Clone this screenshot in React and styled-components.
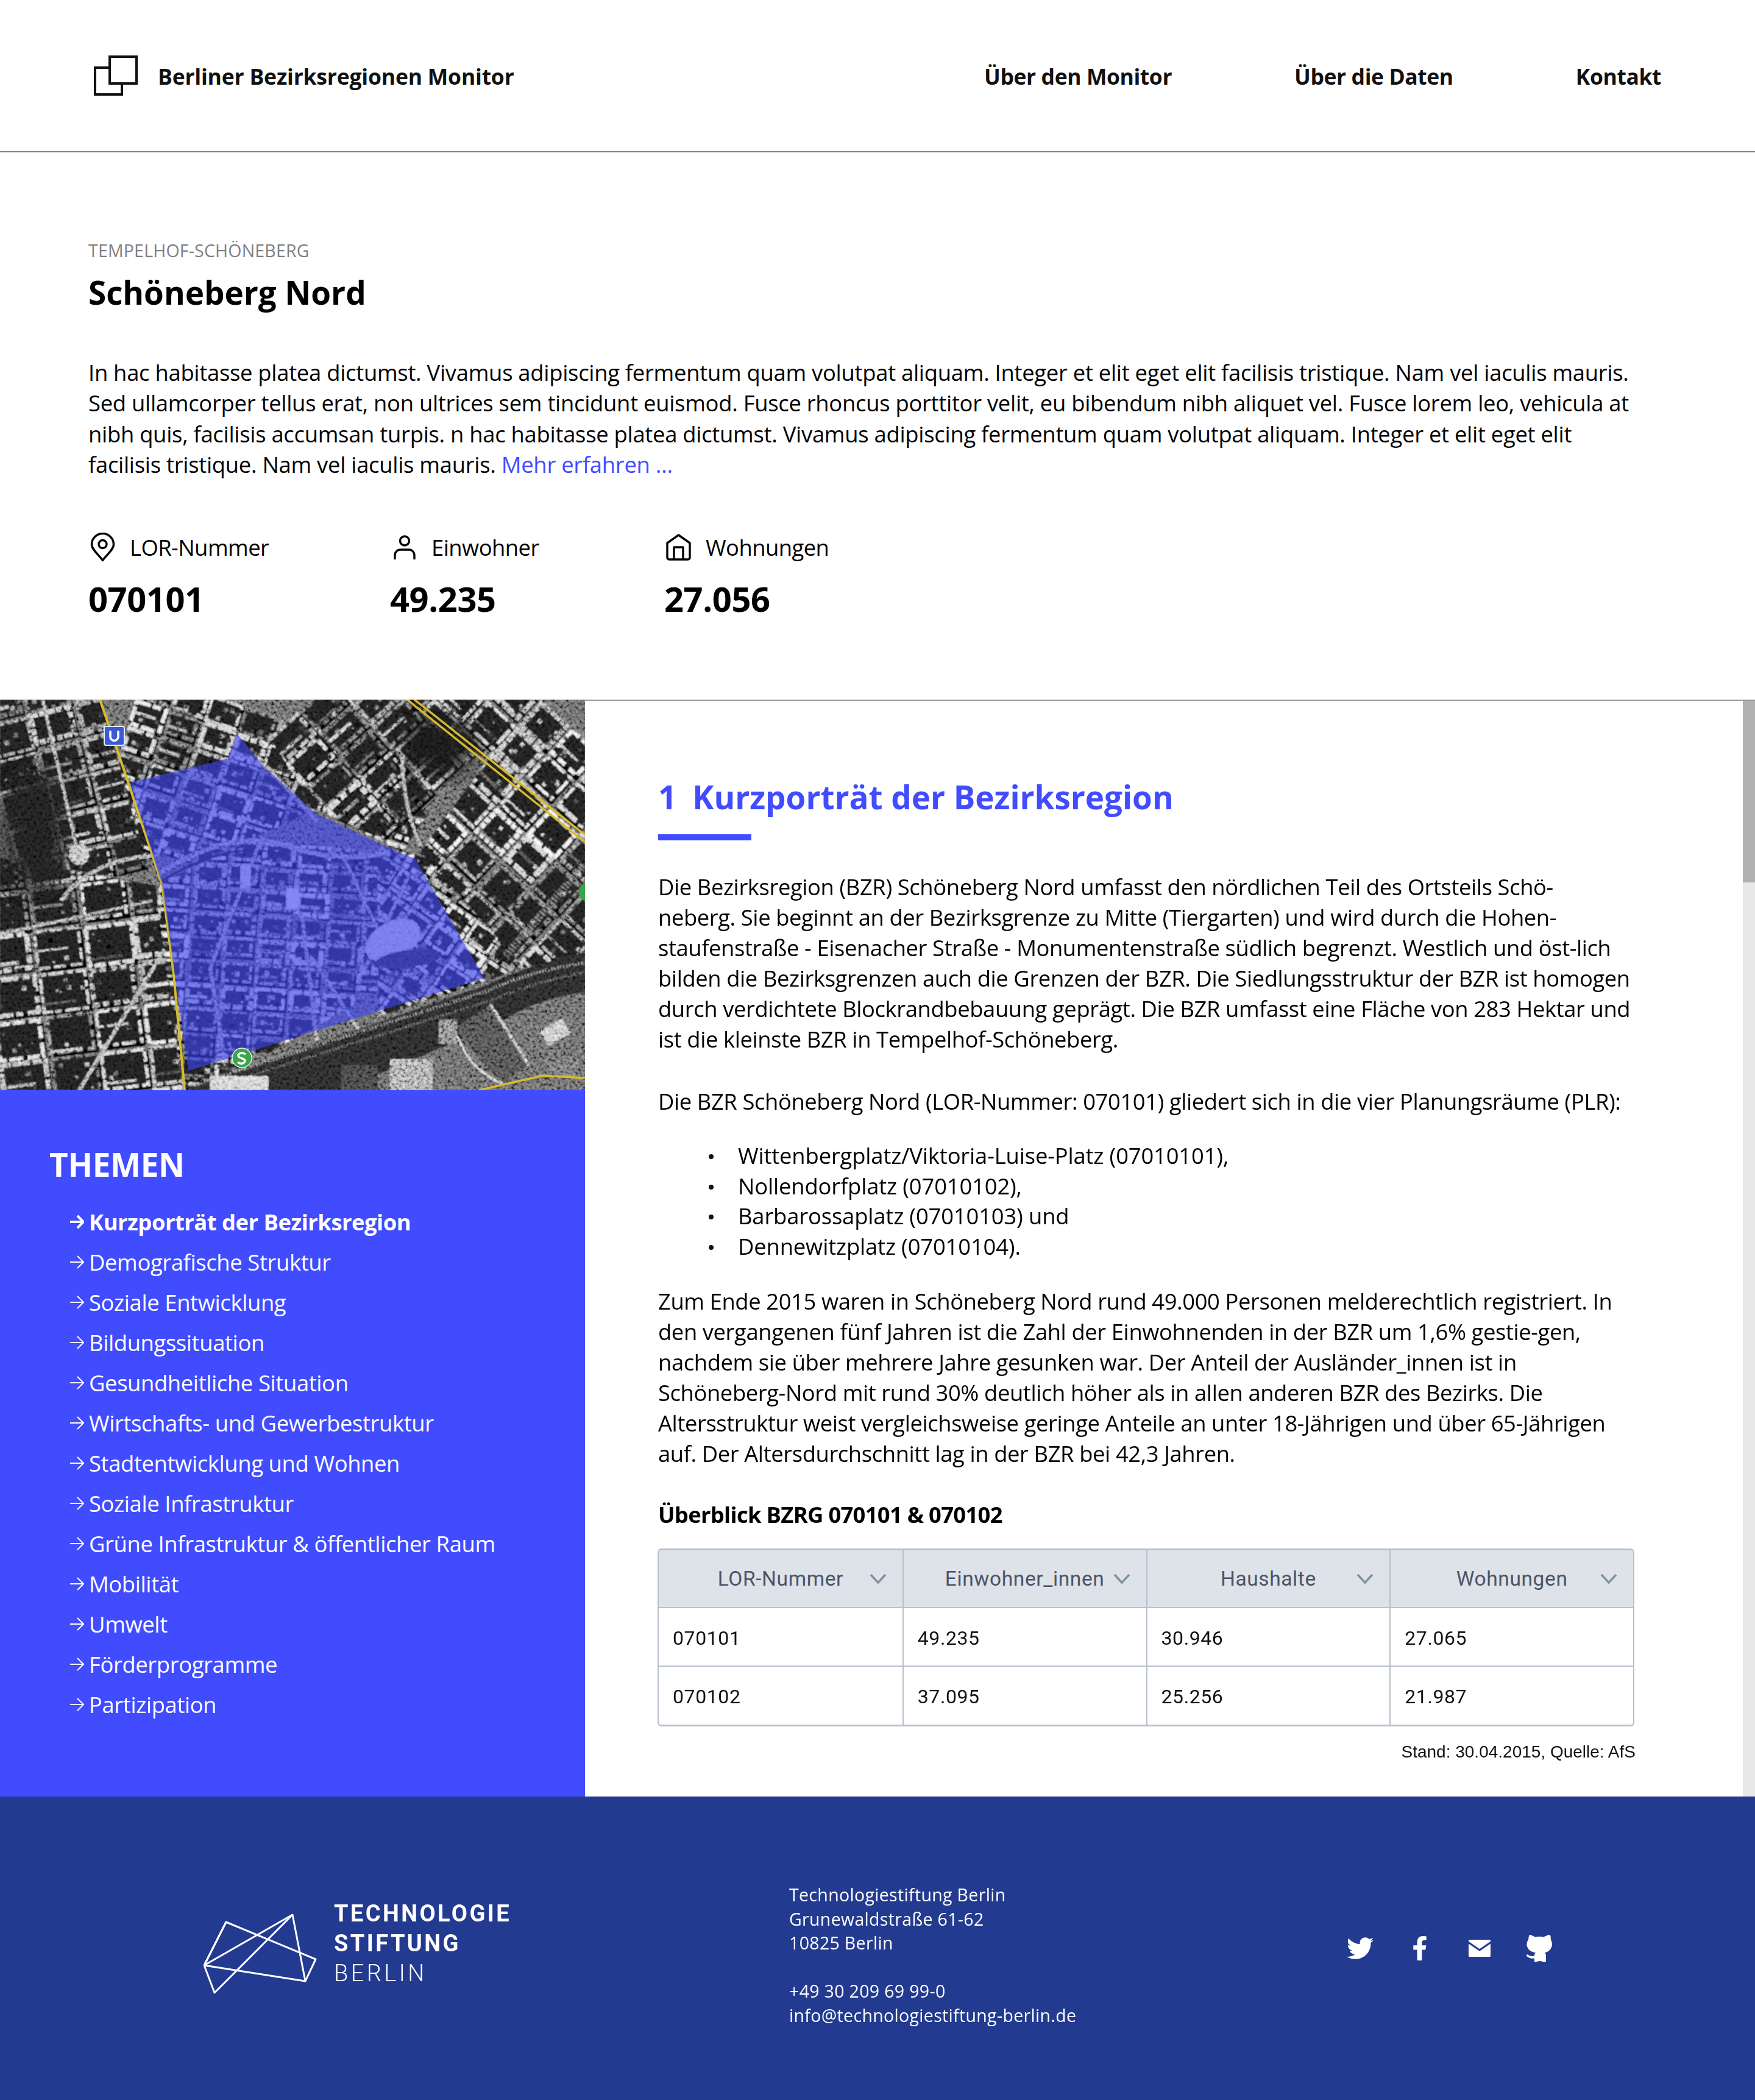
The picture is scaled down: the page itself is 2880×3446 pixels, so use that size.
import React from 'react';
import styled, { createGlobalStyle } from 'styled-components';
import { FaTwitter, FaFacebookF } from 'react-icons/fa';

const Global = createGlobalStyle`
  html, body { margin: 0; padding: 0; background: #fff; }
  body { font-family: "Open Sans", "Noto Sans", sans-serif; color: #000; }
  * { box-sizing: border-box; }
`;

const BLUE = '#414cff';

const Page = styled.div`width: 2880px; height: 3446px; display: flex; flex-direction: column; overflow: hidden;`;

const Header = styled.header`
  height: 250px; border-bottom: 2px solid #808080; padding: 0 154px;
  display: flex; align-items: center; justify-content: space-between;
`;
const Brand = styled.div`display: flex; align-items: center; gap: 33px;`;
const BrandName = styled.div`font-size: 35.5px; font-weight: 700; letter-spacing: -0.2px; color: #111; padding-top: 2px;`;
const Nav = styled.nav`display: flex; gap: 201px; padding-top: 2px;`;
const NavLink = styled.a`font-size: 35.5px; font-weight: 700; letter-spacing: -0.42px; color: #111;`;

const Intro = styled.section`height: 898px; padding: 139px 145px 0;`;
const District = styled.div`font-size: 28.5px; line-height: 44px; color: #808080; letter-spacing: 0.2px;`;
const Title = styled.h1`margin: 13px 0 0; font-size: 53px; line-height: 68px; font-weight: 700; letter-spacing: -0.05px;`;
const Lead = styled.p`margin: 72px 0 0; font-size: 36.4px; line-height: 50.3px; letter-spacing: -0.28px; white-space: nowrap;`;
const More = styled.a`color: ${BLUE};`;
const Stats = styled.div`margin-top: 87px; display: flex;`;
const Stat = styled.div`width: ${p => p.$w}px;`;
const StatLabel = styled.div`display: flex; align-items: center; height: 48px; gap: ${p => p.$gap}px; font-size: 36.4px; letter-spacing: -0.55px; padding-left: ${p => p.$pad}px;`;
const StatValue = styled.div`margin-top: 25px; font-size: 56px; line-height: 70px; font-weight: 700; letter-spacing: -0.4px;`;

const Body = styled.div`height: 1800px; display: grid; grid-template-columns: 960px 1fr;`;
const Side = styled.aside`background: ${BLUE}; color: #fff; display: flex; flex-direction: column;`;
const MapFrame = styled.svg`display: block; width: 960px; height: 641px; flex: none;`;
const Grain = styled.rect`mix-blend-mode: overlay;`;
const Themes = styled.div`padding: 92px 0 0 81px;`;
const ThemesTitle = styled.h2`margin: 0; font-size: 53px; line-height: 60px; font-weight: 700; letter-spacing: -0.3px;`;
const ThemeList = styled.ul`list-style: none; margin: 31px 0 0; padding: 0 0 0 34px;`;
const ThemeItem = styled.li`
  display: flex; align-items: center; gap: 8px; height: 66px;
  font-size: 36.4px; letter-spacing: ${p => p.$active ? -0.5 : -0.38}px; font-weight: ${p => p.$active ? 700 : 400};
`;

const Main = styled.main`border-top: 2px solid #9a9a9a; display: flex; justify-content: space-between;`;
const Content = styled.article`width: 1602px; margin-left: 120px; padding-top: 123px;`;
const Heading = styled.h2`margin: 0; font-size: 53px; line-height: 70px; font-weight: 700; color: ${BLUE}; letter-spacing: -0.03px; display: flex; gap: 26px;`;
const Rule = styled.div`margin-top: 26px; width: 153px; height: 10px; background: ${BLUE};`;
const Para = styled.p`margin: ${p => p.$top}px 0 0; font-size: 36.4px; line-height: 50px; letter-spacing: -0.41px; white-space: nowrap;`;
const Bullets = styled.ul`list-style: none; margin: 40px 0 0; padding: 0 0 0 131px; font-size: 36.4px; line-height: 49.6px; letter-spacing: -0.16px;`;
const Bullet = styled.li`
  position: relative;
  &::before { content: ""; position: absolute; left: -48px; top: 22px; width: 8px; height: 8px; border-radius: 50%; background: #111; }
`;
const Caption = styled.h3`margin: 50px 0 0; font-size: 36.4px; line-height: 50px; font-weight: 700; letter-spacing: -0.7px;`;

const Table = styled.table`
  margin: 31px 0 0 -1px; width: 1603px; table-layout: fixed; border-collapse: separate; border-spacing: 0;
  border: 2px solid #b8c0cc; border-top-width: 3px; border-bottom-width: 3px; border-radius: 6px;
  font-family: Roboto, "Liberation Sans", sans-serif; font-size: 32px; letter-spacing: 0.6px;
`;
const Th = styled.th`
  height: 95px; background: #dee2e9; color: #4a5568; font-weight: 400; font-size: 33.5px; text-align: center; position: relative;
  border-bottom: 2px solid #b8c0cc; border-left: ${p => p.$first ? 0 : '2px solid #b8c0cc'};
`;
const Chevron = styled.svg`position: absolute; right: 26px; top: 38px; width: 28px; height: 18px;`;
const Td = styled.td`
  height: ${p => p.$last ? 95 : 96}px; padding: 3px 23px 0; color: #111;
  border-bottom: ${p => p.$last ? 0 : '2px solid #b8c0cc'}; border-left: ${p => p.$first ? 0 : '2px solid #b8c0cc'};
`;
const Source = styled.div`margin-top: 22px; margin-right: -2px; text-align: right; font-family: "Liberation Sans", Arial, sans-serif; font-size: 28px; line-height: 40px; color: #111;`;

const Scrollbar = styled.div`width: 20px; background: #e8e8e8;`;
const Thumb = styled.div`height: 298px; background: #b0b0b0;`;

const Footer = styled.footer`
  flex: 1; background: #223a8f; color: #fff; padding: 140px 0 0 334px;
  display: grid; grid-template-columns: 961px 915px auto; align-items: start;
`;
const Org = styled.div`display: flex; gap: 28px; margin-top: 28px;`;
const OrgMark = styled.svg`width: 186px; height: 132px; margin-top: 24px; flex: none;`;
const OrgName = styled.div`font-family: Roboto, "Liberation Sans", sans-serif; font-size: 38px; line-height: 49px; letter-spacing: ${p => p.$light ? 4.4 : 3.4}px; font-weight: ${p => p.$light ? 300 : 700}; white-space: nowrap;`;
const Address = styled.address`margin-top: 2px; font-style: normal; font-size: 28.5px; line-height: 39.6px; letter-spacing: 0.33px; white-space: nowrap;`;
const Social = styled.div`display: flex; align-items: center; gap: 54px; margin-top: 86px; height: 46px;`;
const SocialBox = styled.span`width: 44px; height: 46px; display: flex; align-items: center; justify-content: center; font-size: ${p => p.$size || 44}px; color: #fff;`;

const LogoIcon = () => (
  <svg width="72" height="66" viewBox="0 0 72 66" fill="#fff" stroke="#111" strokeWidth="4">
    <rect x="2" y="20" width="44" height="44" />
    <rect x="26" y="2" width="44" height="44" />
  </svg>
);
const PinIcon = () => (
  <svg width="41" height="48" viewBox="0 0 41 48" fill="none" stroke="#000" strokeWidth="3.4">
    <path d="M20.5 45.5C14 36 2.5 28 2.5 19.5a18 18 0 0 1 36 0C38.5 28 27 36 20.5 45.5z" strokeLinejoin="round" />
    <circle cx="20.5" cy="19" r="6.5" />
  </svg>
);
const PersonIcon = () => (
  <svg width="36" height="40" viewBox="0 0 36 40" fill="none" stroke="#000" strokeWidth="3.4">
    <circle cx="18" cy="9.5" r="7.5" />
    <path d="M2 40V33a9 9 0 0 1 9-9h14a9 9 0 0 1 9 9v7" />
  </svg>
);
const HouseIcon = () => (
  <svg width="41" height="44" viewBox="0 0 41 44" fill="none" stroke="#000" strokeWidth="3.4" strokeLinejoin="round">
    <path d="M20.5 2 2 15v24a3 3 0 0 0 3 3h31a3 3 0 0 0 3-3V15z" />
    <path d="M13 42V22h15v20" />
  </svg>
);
const Arrow = ({ bold }) => (
  <svg width="23" height="24" viewBox="0 0 23 24" fill="none" stroke="#fff" strokeWidth={bold ? 4 : 2}>
    <path d="M0 12h21M12 2l10 10-10 10" />
  </svg>
);
const GithubCat = () => (
  <svg width="44" height="46" viewBox="0 0 44 46" fill="#fff">
    <path d="M5 2.500 Q5.500 .5 8 1 L15 4.500 Q22 3 29 4.500 L37 1 Q40 .5 40.500 3 L41 9 Q44 14 42.500 20 Q40 28 31 30.500 Q33 32 33 35 V44 Q33 45.500 31 45.500 H28 Q27 44 23 44 Q18 44 17.500 45.500 H15 Q14 45.500 14 44 V39.500 Q6 41 .5 35 L2 33 Q7 37 14 35.500 Q14 32 16 30.500 Q4 28 2 20 Q0 14 4 9z" />
  </svg>
);

/* ---------- aerial map drawn from seeded blocks ---------- */
const rng = (seed) => { let s = seed; return () => (s = (s * 16807) % 2147483647) / 2147483647; };
const makeBlocks = (seed, w, h, cols, rows, bright) => {
  const r = rng(seed * 991); const out = [];
  for (let i = 0; i < cols; i++) for (let j = 0; j < rows; j++) {
    const g = Math.min(245, Math.floor((95 + r() * 140) * bright));
    const g2 = Math.min(245, Math.floor((60 + r() * 150) * bright));
    const inset = 4 + r() * 7;
    const dots = [];
    for (let k = 0; k < 5; k++) dots.push({ x: r() * (w - 22), y: r() * (h - 22), c: Math.floor(r() * 170 * bright), s: 2 + r() * 6 });
    const a = 6 + r() * 18; const b = 2 + r() * 4; const c = 8 + r() * 24;
    out.push({ x: i * w + (r() - .5) * 4, y: j * h + (r() - .5) * 4, w: w - inset, h: h - inset, g, g2, dots, sw: 3.5 + r() * 5, dash: `${a} ${b} ${c} ${b * 1.5}`, cut: r() });
  }
  return out;
};
const BlockGrid = ({ seed, w, h, cols, rows, angle, ox, oy, clip, bright = 1 }) => (
  <g clipPath={`url(#${clip})`}>
    <g transform={`translate(${ox} ${oy}) rotate(${angle})`}>
      {makeBlocks(seed, w, h, cols, rows, bright).map((b, i) => (
        <g key={i} transform={`translate(${b.x} ${b.y})`}>
          <rect x="3" y="4" width={b.w} height={b.h} fill="#050505" />
          <rect x="0" y="0" width={b.w - 3} height={b.h - 3} fill="#1b1b1b" stroke={`rgb(${b.g},${b.g},${b.g})`} strokeWidth={b.sw} strokeDasharray={b.dash} />
          {b.cut > .4 && <path d={`M0 ${b.h * b.cut}H${b.w * .7}`} stroke={`rgb(${b.g2},${b.g2},${b.g2})`} strokeWidth={b.sw * .7} />}
          {b.dots.map((d, k) => <rect key={k} x={d.x + 8} y={d.y + 8} width={d.s} height={d.s} fill={`rgb(${d.c},${d.c},${d.c})`} />)}
        </g>
      ))}
    </g>
  </g>
);

const AERIAL = [
  { seed: 11, w: 78, h: 58, cols: 5, rows: 6, angle: -14, ox: -40, oy: -8, clip: 'rLeftTop', bright: .9 },
  { seed: 17, w: 82, h: 70, cols: 6, rows: 8, angle: -7, ox: -40, oy: 255, clip: 'rLeftBot' },
  { seed: 23, w: 58, h: 46, cols: 9, rows: 6, angle: 18, ox: 240, oy: -40, clip: 'rTop' },
  { seed: 29, w: 56, h: 40, cols: 12, rows: 11, angle: 4, ox: 270, oy: 225, clip: 'rMid' },
  { seed: 37, w: 50, h: 44, cols: 10, rows: 8, angle: 34, ox: 560, oy: 160, clip: 'rInner', bright: 1.05 },
  { seed: 53, w: 66, h: 60, cols: 11, rows: 13, angle: 43, ox: 745, oy: -130, clip: 'rRight', bright: 1.1 },
  { seed: 61, w: 74, h: 50, cols: 6, rows: 5, angle: -42, ox: 440, oy: 70, clip: 'rCentreTop', bright: .95 },
];
const POLY = '389,56 374,97 213,136 266,303 309,609 795,457 681,261 665,255 520,188 433,110';

const MapView = () => (
  <MapFrame viewBox="0 0 960 641">
    <defs>
      <filter id="noise" x="0" y="0" width="100%" height="100%">
        <feTurbulence type="fractalNoise" baseFrequency="0.2" numOctaves="2" seed="7" />
        <feColorMatrix values="2 0 0 0 -.5 2 0 0 0 -.5 2 0 0 0 -.5 0 0 0 0 1" />
      </filter>
      <filter id="soft"><feGaussianBlur stdDeviation="1" /></filter>
      <filter id="blob"><feGaussianBlur stdDeviation="18" /></filter>
      <clipPath id="rLeftTop"><polygon points="0,0 165,0 250,300 0,260" /></clipPath>
      <clipPath id="rLeftBot"><polygon points="0,260 255,305 300,641 0,641" /></clipPath>
      <clipPath id="rTop"><polygon points="165,0 560,0 700,190 660,250 520,180 250,300" /></clipPath>
      <clipPath id="rCentreTop"><polygon points="400,0 668,0 800,110 800,280 680,250 520,180" /></clipPath>
      <clipPath id="rMid"><polygon points="255,305 520,180 620,240 620,480 330,641 300,641" /></clipPath>
      <clipPath id="rInner"><polygon points="620,240 700,260 860,440 620,520" /></clipPath>
      <clipPath id="rRight"><polygon points="668,0 960,0 960,420 860,440 690,250 800,100" /></clipPath>
    </defs>
    <rect width="960" height="641" fill="#5c5c5c" />
    <g filter="url(#soft)">
      {AERIAL.map(a => <BlockGrid key={a.seed} {...a} />)}
      {/* parks and dark tree cover */}
      <ellipse cx="60" cy="215" rx="55" ry="105" fill="#1c1c1c" filter="url(#blob)" />
      <ellipse cx="720" cy="75" rx="60" ry="55" fill="#161616" filter="url(#blob)" />
      <circle cx="130" cy="254" r="17" fill="#b4b4b4" />
      {/* avenues */}
      <g fill="none" stroke="#9c9c9c">
        <path d="M262 285 Q380 210 470 240 T640 250" strokeWidth="7" />
        <path d="M262 300 Q380 226 470 256" strokeWidth="4" stroke="#141414" />
        <path d="M100 330 Q150 260 262 255" strokeWidth="6" />
        <path d="M430 225 L345 440 L370 600" strokeWidth="5" />
        <path d="M495 350 L520 560" strokeWidth="5" />
        <path d="M510 420 L600 560" strokeWidth="5" />
        <path d="M520 200 L420 90" strokeWidth="5" />
        <path d="M600 440 L670 290" strokeWidth="5" />
        <path d="M560 250 L650 440" strokeWidth="4" />
        <path d="M130 641 L270 410" strokeWidth="6" />
        <path d="M0 385 L250 330" strokeWidth="4" />
        <path d="M660 90 Q660 170 690 240" strokeWidth="5" />
        <path d="M70 0 L130 260" strokeWidth="5" />
      </g>
      {/* sunlit dome */}
      <ellipse cx="645" cy="395" rx="48" ry="30" fill="#d8d8d8" transform="rotate(-28 645 395)" />
      <ellipse cx="670" cy="425" rx="55" ry="15" fill="#2a2a2a" transform="rotate(-8 670 425)" />
      <rect x="470" y="310" width="20" height="34" fill="#f2f2f2" />
      <rect x="395" y="270" width="16" height="40" fill="#d8d8d8" />
      {/* railway band */}
      <path d="M300 641 L800 468 Q880 430 960 415 V480 Q880 490 820 530 L560 641z" fill="#262626" />
      <path d="M320 632 L800 478 Q870 445 960 432" fill="none" stroke="#8a8a8a" strokeWidth="5" strokeDasharray="2 3" />
      <path d="M350 636 L810 492 Q880 462 960 448" fill="none" stroke="#6a6a6a" strokeWidth="4" strokeDasharray="2 3" />
      <path d="M830 420 L960 270" stroke="#6a6a6a" strokeWidth="12" strokeDasharray="3 3" />
      {/* stadium and sites at the bottom */}
      <path d="M745 540 L805 500 L868 600 L825 630z" fill="#474747" />
      <path d="M745 540 Q770 610 825 630" fill="none" stroke="#ddd" strokeWidth="3" />
      <path d="M805 500 L868 600" fill="none" stroke="#bbb" strokeWidth="4" />
      <rect x="640" y="590" width="70" height="51" fill="#9a9a9a" />
      <rect x="345" y="618" width="95" height="23" fill="#c8c8c8" />
      <rect x="890" y="535" width="42" height="28" fill="#bbb" transform="rotate(-30 905 547)" />
      <rect x="560" y="600" width="60" height="41" fill="#3c3c3c" />
      <rect x="720" y="525" width="30" height="40" fill="#777" />
      <rect x="900" y="590" width="50" height="30" fill="#666" />
    </g>
    <Grain width="960" height="641" filter="url(#noise)" opacity="0.65" />
    {/* roads */}
    <path d="M164 0 L203 114 L266 303 L285 451 L303 641" fill="none" stroke="#d6bb2e" strokeWidth="4" />
    <path d="M668 0 L960 234" fill="none" stroke="#d6bb2e" strokeWidth="3.500" />
    <path d="M680 0 L960 222" fill="none" stroke="#d6bb2e" strokeWidth="3.500" />
    <path d="M786 641 L891 617 L960 621" fill="none" stroke="#d6bb2e" strokeWidth="3.500" />
    {/* region */}
    <polygon points={POLY} fill="#3b44f5" opacity="0.62" />
    {/* stations */}
    <rect x="171" y="44" width="33" height="31" rx="3" fill="#3b5bd6" stroke="#e7ecf7" strokeWidth="2" />
    <path d="M181 51v10a6.500 6.500 0 0 0 13 0V51" fill="none" stroke="#fff" strokeWidth="3.500" />
    <circle cx="397" cy="588" r="16" fill="#38a64a" stroke="#dff0df" strokeWidth="1.500" />
    <path d="M403 582q-6-4-10-1t0 6l7 3q4 3 0 6t-10-1" fill="none" stroke="#fff" strokeWidth="3.500" />
    <circle cx="966" cy="316" r="16" fill="#38a64a" />
  </MapFrame>
);

const TOPICS = ['Kurzporträt der Bezirksregion', 'Demografische Struktur', 'Soziale Entwicklung', 'Bildungssituation', 'Gesundheitliche Situation', 'Wirtschafts- und Gewerbestruktur', 'Stadtentwicklung und Wohnen', 'Soziale Infrastruktur', 'Grüne Infrastruktur & öffentlicher Raum', 'Mobilität', 'Umwelt', 'Förderprogramme', 'Partizipation'];
const COLS = ['LOR-Nummer', 'Einwohner_innen', 'Haushalte', 'Wohnungen'];
const ROWS = [['070101', '49.235', '30.946', '27.065'], ['070102', '37.095', '25.256', '21.987']];
const PLR = ['Wittenbergplatz/Viktoria-Luise-Platz (07010101),', 'Nollendorfplatz (07010102),', 'Barbarossaplatz (07010103) und', 'Dennewitzplatz (07010104).'];

export default function App() {
  return (
    <Page>
      <Global />
      <Header>
        <Brand><LogoIcon /><BrandName>Berliner Bezirksregionen Monitor</BrandName></Brand>
        <Nav>
          <NavLink>Über den Monitor</NavLink>
          <NavLink>Über die Daten</NavLink>
          <NavLink>Kontakt</NavLink>
        </Nav>
      </Header>
      <Intro>
        <District>TEMPELHOF-SCHÖNEBERG</District>
        <Title>Schöneberg Nord</Title>
        <Lead>
          In hac habitasse platea dictumst. Vivamus adipiscing fermentum quam volutpat aliquam. Integer et elit eget elit facilisis tristique. Nam vel iaculis mauris.<br />
          Sed ullamcorper tellus erat, non ultrices sem tincidunt euismod. Fusce rhoncus porttitor velit, eu bibendum nibh aliquet vel. Fusce lorem leo, vehicula at<br />
          nibh quis, facilisis accumsan turpis. n hac habitasse platea dictumst. Vivamus adipiscing fermentum quam volutpat aliquam. Integer et elit eget elit<br />
          facilisis tristique. Nam vel iaculis mauris. <More>Mehr erfahren …</More>
        </Lead>
        <Stats>
          <Stat $w={495}>
            <StatLabel $gap={24} $pad={3}><PinIcon />LOR-Nummer</StatLabel>
            <StatValue>070101</StatValue>
          </Stat>
          <Stat $w={450}>
            <StatLabel $gap={26} $pad={6}><PersonIcon />Einwohner</StatLabel>
            <StatValue>49.235</StatValue>
          </Stat>
          <Stat $w={500}>
            <StatLabel $gap={24} $pad={3}><HouseIcon />Wohnungen</StatLabel>
            <StatValue>27.056</StatValue>
          </Stat>
        </Stats>
      </Intro>
      <Body>
        <Side>
          <MapView />
          <Themes>
            <ThemesTitle>THEMEN</ThemesTitle>
            <ThemeList>
              {TOPICS.map((t, i) => (
                <ThemeItem key={t} $active={i === 0}><Arrow bold={i === 0} />{t}</ThemeItem>
              ))}
            </ThemeList>
          </Themes>
        </Side>
        <Main>
          <Content>
            <Heading><span>1</span><span>Kurzporträt der Bezirksregion</span></Heading>
            <Rule />
            <Para $top={51}>
              Die Bezirksregion (BZR) Schöneberg Nord umfasst den nördlichen Teil des Ortsteils Schö-<br />
              neberg. Sie beginnt an der Bezirksgrenze zu Mitte (Tiergarten) und wird durch die Hohen-<br />
              staufenstraße - Eisenacher Straße - Monumentenstraße südlich begrenzt. Westlich und öst-lich<br />
              bilden die Bezirksgrenzen auch die Grenzen der BZR. Die Siedlungsstruktur der BZR ist homogen<br />
              durch verdichtete Blockrandbebauung geprägt. Die BZR umfasst eine Fläche von 283 Hektar und<br />
              ist die kleinste BZR in Tempelhof-Schöneberg.
            </Para>
            <Para $top={52}>Die BZR Schöneberg Nord (LOR-Nummer: 070101) gliedert sich in die vier Planungsräume (PLR):</Para>
            <Bullets>{PLR.map(p => <Bullet key={p}>{p}</Bullet>)}</Bullets>
            <Para $top={40}>
              Zum Ende 2015 waren in Schöneberg Nord rund 49.000 Personen melderechtlich registriert. In<br />
              den vergangenen fünf Jahren ist die Zahl der Einwohnenden in der BZR um 1,6% gestie-gen,<br />
              nachdem sie über mehrere Jahre gesunken war. Der Anteil der Ausländer_innen ist in<br />
              Schöneberg-Nord mit rund 30% deutlich höher als in allen anderen BZR des Bezirks. Die<br />
              Altersstruktur weist vergleichsweise geringe Anteile an unter 18-Jährigen und über 65-Jährigen<br />
              auf. Der Altersdurchschnitt lag in der BZR bei 42,3 Jahren.
            </Para>
            <Caption>Überblick BZRG 070101 &amp; 070102</Caption>
            <Table>
              <thead>
                <tr>
                  {COLS.map((c, i) => (
                    <Th key={c} $first={i === 0}>
                      {c}
                      <Chevron viewBox="0 0 28 18" fill="none" stroke="#7d949f" strokeWidth="3.500"><path d="M2 2l12 13L26 2" /></Chevron>
                    </Th>
                  ))}
                </tr>
              </thead>
              <tbody>
                {ROWS.map((r, j) => (
                  <tr key={r[0]}>
                    {r.map((v, i) => <Td key={i} $first={i === 0} $last={j === ROWS.length - 1}>{v}</Td>)}
                  </tr>
                ))}
              </tbody>
            </Table>
            <Source>Stand: 30.04.2015, Quelle: AfS</Source>
          </Content>
          <Scrollbar><Thumb /></Scrollbar>
        </Main>
      </Body>
      <Footer>
        <Org>
          <OrgMark viewBox="0 0 186 132" fill="none" stroke="#fff" strokeWidth="3" strokeLinejoin="round">
            <path d="M37 14 184 75 167 111 1 85z" />
            <path d="M1 85 146 2 167 111" />
            <path d="M146 2 18 130 1 85 37 14" />
          </OrgMark>
          <div>
            <OrgName>TECHNOLOGIE</OrgName>
            <OrgName>STIFTUNG</OrgName>
            <OrgName $light>BERLIN</OrgName>
          </div>
        </Org>
        <Address>
          Technologiestiftung Berlin<br />
          Grunewaldstraße 61-62<br />
          10825 Berlin<br /><br />
          +49 30 209 69 99-0<br />
          info@technologiestiftung-berlin.de
        </Address>
        <Social>
          <SocialBox $size={46}><FaTwitter /></SocialBox>
          <SocialBox $size={40}><FaFacebookF /></SocialBox>
          <SocialBox>
            <svg width="36" height="28" viewBox="0 0 36 28"><rect width="36" height="28" rx="1.500" fill="#fff" /><path d="M-1 4 18 17 37 4" fill="none" stroke="#223a8f" strokeWidth="3" /></svg>
          </SocialBox>
          <SocialBox><GithubCat /></SocialBox>
        </Social>
      </Footer>
    </Page>
  );
}
